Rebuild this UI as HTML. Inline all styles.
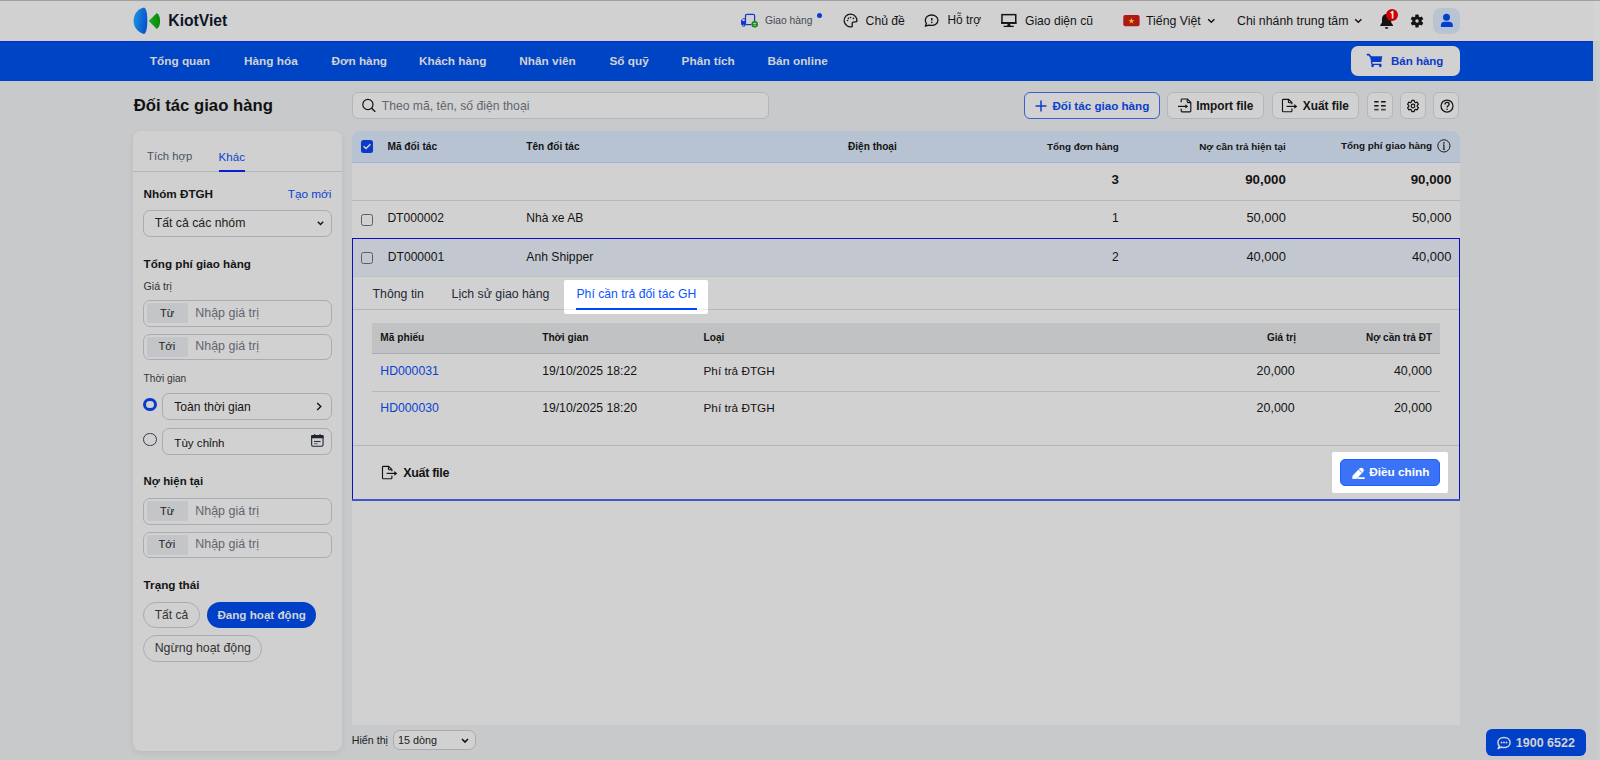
<!DOCTYPE html>
<html><head><meta charset="utf-8">
<style>
*{box-sizing:border-box;margin:0;padding:0}
html,body{width:1600px;height:760px;overflow:hidden}
body{font-family:"Liberation Sans",sans-serif;background:#c8c9cb;color:#141414;position:relative;font-size:12px}
.a{position:absolute}
.t{position:absolute;white-space:nowrap;line-height:1}
.r{text-align:right}
.b{font-weight:700}
.nav{color:#d2d2d2;font-weight:700;font-size:11.8px;top:56.1px}
.btn{position:absolute;border:1px solid #b4b6b9;border-radius:6px;background:#d1d1d1}
.inp{position:absolute;border:1px solid #a9acb0;border-radius:7px;background:#d1d1d1}
.pre{position:absolute;left:3px;top:2px;width:41px;height:20px;background:#c4c5c8;border-radius:2px}
.ph{color:#5f6670}
.th{font-weight:700;font-size:10px}
svg{position:absolute;overflow:visible}
</style></head>
<body>
<!-- header -->
<div class="a" style="left:0;top:0;width:1600px;height:1px;background:#9fa19f"></div>
<div class="a" style="left:0;top:1px;width:1593px;height:40px;background:#d1d1d1"></div>
<div class="a" style="left:1593px;top:1px;width:7px;height:40px;background:#d4d4d4"></div><div class="a" style="left:1597px;top:41px;width:3px;height:719px;background:#cbcccd"></div>
<div class="a" style="left:0;top:41px;width:1593px;height:39.7px;background:#0044c6;border-top:1px solid #0630c4"></div>

<svg style="left:0;top:0" width="200" height="41">
 <defs>
  <linearGradient id="lg1" x1="0" y1="0" x2="1" y2="0.3"><stop offset="0" stop-color="#1a9ae0"/><stop offset="1" stop-color="#0a55cc"/></linearGradient>
  <linearGradient id="lg2" x1="0" y1="0" x2="1" y2="0"><stop offset="0" stop-color="#18a818"/><stop offset="1" stop-color="#08880e"/></linearGradient>
 </defs>
 <path d="M144,7.6 C137.5,9.2 133.6,14.5 133.6,20.8 C133.6,27 137.5,32.3 144,34 C146.2,33.2 147.3,28.5 147.3,20.8 C147.3,13.2 146.2,8.4 144,7.6 Z" fill="url(#lg1)"/>
 <path d="M156.8,12.9 C158.8,14.2 160.1,17.2 160.1,21 C160.1,24.8 158.8,27.8 156.8,29.1 L148.8,21 Z" fill="url(#lg2)"/>
</svg>
<div class="t b" style="left:168.3px;top:12.9px;font-size:15.7px;color:#0d1526">KiotViet</div>

<!-- truck -->
<svg style="left:736px;top:10px" width="26" height="20" viewBox="0 0 26 20">
 <path d="M9.5,14.5 V5.6 Q9.5,4.3 11,4.3 H17.2 Q18.6,4.3 18.6,5.6 V11" fill="none" stroke="#1038cc" stroke-width="1.2"/>
 <path d="M9.5,14.6 H15.3" stroke="#1038cc" stroke-width="1.2"/>
 <path d="M5,14.8 V10.2 L7.2,8.2 H9.8 V14.8 Z" fill="#1038cc"/>
 <rect x="6.4" y="9.2" width="2.3" height="1.8" fill="#d1d1d1"/>
 <circle cx="7.6" cy="15.3" r="1.5" fill="#1038cc"/><circle cx="7.6" cy="15.3" r="0.6" fill="#d1d1d1"/>
 <circle cx="18.7" cy="14.3" r="3.3" fill="#0c8c1a"/>
 <path d="M17.1,13.4 H20.3 M17.5,15.2 H19.9" stroke="#d1d1d1" stroke-width="0.9"/>
</svg>
<div class="t" style="left:765px;top:15.8px;font-size:10.3px;color:#464b54">Giao hàng</div>
<div class="a" style="left:817px;top:12.5px;width:5px;height:5px;border-radius:50%;background:#0a3bd0"></div>
<!-- palette -->
<svg style="left:840px;top:10px" width="22" height="20" viewBox="0 0 22 20">
 <path d="M12.2,16.6 A6.4,6.4 0 1 1 16.8,11.6 L13.3,12.1 Q12.2,12.2 12.2,13.2 Z" fill="none" stroke="#141414" stroke-width="1.3" stroke-linejoin="round"/>
 <circle cx="8.4" cy="8.4" r="0.8" fill="#141414"/><circle cx="10.5" cy="7.5" r="0.8" fill="#141414"/><circle cx="13.4" cy="8.4" r="0.8" fill="#141414"/><circle cx="7.5" cy="10.5" r="0.8" fill="#141414"/>
</svg>
<div class="t" style="left:865.6px;top:15px;font-size:12.2px">Chủ đề</div>
<!-- help bubble -->
<svg style="left:921px;top:10px" width="22" height="20" viewBox="0 0 22 20">
 <path d="M4.3,16.2 L5.4,13.4 C4.6,12.5 4.3,11.4 4.3,10.2 C4.3,7.2 7.1,5 10.6,5 C14.1,5 16.9,7.2 16.9,10.2 C16.9,13.2 14.1,15.4 10.6,15.4 C9.6,15.4 8.7,15.3 7.9,15.1 Z" fill="none" stroke="#141414" stroke-width="1.3" stroke-linejoin="round"/>
 <path d="M10.8,7.9 V10.6" stroke="#141414" stroke-width="1.5"/><circle cx="10.8" cy="12.4" r="0.8" fill="#141414"/>
</svg>
<div class="t" style="left:947.5px;top:15.2px;font-size:11.9px">Hỗ trợ</div>
<!-- monitor -->
<svg style="left:997px;top:10px" width="24" height="20" viewBox="0 0 24 20">
 <rect x="4.95" y="4.65" width="13.8" height="8.4" fill="none" stroke="#141414" stroke-width="1.5"/>
 <path d="M4.2,12.9 H19.5" stroke="#141414" stroke-width="1.8"/>
 <path d="M11,13.6 L10,16 H13.8 L12.8,13.6 Z" fill="#141414"/>
 <path d="M6.6,16.4 H16.8" stroke="#141414" stroke-width="1.3"/>
</svg>
<div class="t" style="left:1025px;top:15.1px;font-size:12.1px">Giao diện cũ</div>
<!-- flag -->
<svg style="left:1122.5px;top:15px" width="17" height="12" viewBox="0 0 17 12">
 <rect x="0.3" y="0" width="16.3" height="11.3" rx="2" fill="#b01818"/>
 <path d="M8.45,2.6 L9.2,4.9 H11.5 L9.65,6.3 L10.35,8.6 L8.45,7.2 L6.55,8.6 L7.25,6.3 L5.4,4.9 H7.7 Z" fill="#d8c400"/>
</svg>
<div class="t" style="left:1146px;top:15.2px;font-size:12.3px">Tiếng Việt</div>
<svg style="left:1207px;top:18px" width="9" height="6" viewBox="0 0 9 6"><path d="M1.2,1.2 L4.3,4.2 L7.4,1.2" fill="none" stroke="#141414" stroke-width="1.5"/></svg>
<div class="t" style="left:1237px;top:15px;font-size:12.3px">Chi nhánh trung tâm</div>
<svg style="left:1354px;top:18px" width="9" height="6" viewBox="0 0 9 6"><path d="M1.2,1.2 L4.3,4.2 L7.4,1.2" fill="none" stroke="#141414" stroke-width="1.5"/></svg>
<!-- bell -->
<svg style="left:1379px;top:12px" width="16" height="18" viewBox="0 0 16 18">
 <path d="M7.6,2 C4.6,2 3,4.4 3,7.2 V10.6 L1.2,13.2 V14 H14 V13.2 L12.2,10.6 V7.2 C12.2,4.4 10.6,2 7.6,2 Z" fill="#141414"/>
 <path d="M5.8,15.2 C6,16.3 6.7,16.9 7.6,16.9 C8.5,16.9 9.2,16.3 9.4,15.2 Z" fill="#141414"/>
</svg>
<div class="a" style="left:1386px;top:8.8px;width:12.4px;height:12.4px;border-radius:50%;background:#d10000"></div>
<svg style="left:0;top:0" width="1600" height="41"><path d="M1390.6,13.2 L1392.6,11.6 V18.6" fill="none" stroke="#e6e6e6" stroke-width="1.7" stroke-linejoin="round"/></svg>
<!-- gear -->
<svg style="left:1416.7px;top:20.6px" width="1" height="1" viewBox="0 0 1 1">
 <g><rect x="-1.7" y="-6.4" width="3.4" height="3" rx="0.6" transform="rotate(120)" fill="#141414"/><rect x="-1.7" y="-6.4" width="3.4" height="3" rx="0.6" transform="rotate(180)" fill="#141414"/><rect x="-1.7" y="-6.4" width="3.4" height="3" rx="0.6" transform="rotate(240)" fill="#141414"/><rect x="-1.7" y="-6.4" width="3.4" height="3" rx="0.6" transform="rotate(300)" fill="#141414"/><rect x="-1.7" y="-6.4" width="3.4" height="3" rx="0.6" transform="rotate(360)" fill="#141414"/><rect x="-1.7" y="-6.4" width="3.4" height="3" rx="0.6" transform="rotate(420)" fill="#141414"/><circle r="4.7" fill="#141414"/><circle r="1.7" fill="#d1d1d1"/></g>
</svg>
<!-- avatar -->
<div class="a" style="left:1433.3px;top:7.5px;width:26.7px;height:26.5px;border-radius:8px;background:#b8c3d3"></div>
<svg style="left:1430px;top:4px" width="34" height="33" viewBox="0 0 34 33">
 <circle cx="16.5" cy="13.3" r="3.5" fill="#0040d0"/>
 <path d="M10.9,23 V21 C10.9,18.8 12.6,17.8 14.5,17.8 H19 C21,17.8 22.8,18.8 22.8,21 V23 Z" fill="#0040d0"/>
</svg>
<!-- nav -->
<div class="t nav" style="left:149.8px">Tổng quan</div>
<div class="t nav" style="left:244px">Hàng hóa</div>
<div class="t nav" style="left:331.5px">Đơn hàng</div>
<div class="t nav" style="left:419px">Khách hàng</div>
<div class="t nav" style="left:519.3px">Nhân viên</div>
<div class="t nav" style="left:609.4px">Sổ quỹ</div>
<div class="t nav" style="left:681.6px">Phân tích</div>
<div class="t nav" style="left:767.4px">Bán online</div>
<div class="a" style="left:1350.6px;top:45.6px;width:109.2px;height:30px;border-radius:7px;background:#d1d1d1"></div>
<svg style="left:1360px;top:48px" width="30" height="24" viewBox="0 0 30 24">
 <path d="M7.5,6.7 H9.1 L10.6,8.8" fill="none" stroke="#0a3bc8" stroke-width="1.7" stroke-linecap="round" stroke-linejoin="round"/>
 <path d="M9.9,8.3 H22.3 L21.3,13.9 H11.2 Z" fill="#0a3bc8"/>
 <path d="M11.3,13.6 L12.2,16.4 H21.3" fill="none" stroke="#0a3bc8" stroke-width="1.4"/>
 <circle cx="12.6" cy="17.8" r="1.35" fill="#0a3bc8"/><circle cx="20.3" cy="17.8" r="1.35" fill="#0a3bc8"/>
</svg>
<div class="t b" style="left:1391px;top:55.9px;font-size:11.5px;color:#0a3bc8">Bán hàng</div>

<!-- page title + toolbar -->
<div class="t b" style="left:133.75px;top:98.3px;font-size:16.7px;color:#111">Đối tác giao hàng</div>
<div class="inp" style="left:351.5px;top:92.2px;width:417px;height:26.4px;border-radius:6px;border-color:#b3b5b8"></div>
<svg style="left:362px;top:98px" width="15" height="15" viewBox="0 0 15 15">
 <circle cx="5.9" cy="6.5" r="5.1" fill="none" stroke="#141414" stroke-width="1.2"/><path d="M9.6,10.2 L13.3,13.8" stroke="#141414" stroke-width="1.4"/>
</svg>
<div class="t ph" style="left:381.7px;top:100px;font-size:12.2px">Theo mã, tên, số điện thoại</div>

<div class="btn" style="left:1024.3px;top:92.3px;width:136.1px;height:26.5px;border-color:#3d5fcf"></div>
<svg style="left:1035px;top:100px" width="12" height="12" viewBox="0 0 12 12"><path d="M6,0.6 V11.4 M0.6,6 H11.4" stroke="#0a3ecc" stroke-width="1.5"/></svg>
<div class="t b" style="left:1052.4px;top:100.35px;font-size:11.64px;color:#0a3ecc">Đối tác giao hàng</div>

<div class="btn" style="left:1167.4px;top:92.3px;width:97px;height:26.5px"></div>
<svg style="left:1170px;top:95px" width="30" height="20" viewBox="0 0 30 20">
 <path d="M11.2,7.2 V4.8 Q11.2,4 12,4 H17.4 L20.8,7.4 V16 Q20.8,16.8 20,16.8 H12 Q11.2,16.8 11.2,16 V13.8" fill="none" stroke="#141414" stroke-width="1.15"/>
 <path d="M17.2,4.2 V6.6 Q17.2,7.6 18.2,7.6 H20.6" fill="none" stroke="#141414" stroke-width="1.1"/>
 <path d="M8,11.4 H16.4" stroke="#141414" stroke-width="1.2"/>
 <path d="M15.4,9.2 L18.1,11.4 L15.4,13.6 Z" fill="#141414"/>
</svg>
<div class="t b" style="left:1196.2px;top:101.2px;font-size:11.85px">Import file</div>

<div class="btn" style="left:1271.9px;top:92.3px;width:87.5px;height:26.5px"></div>
<svg style="left:1276px;top:95px" width="30" height="20" viewBox="0 0 30 20">
 <path d="M15.9,9.3 V7.6 L12.6,4.3 H7.3 Q6.5,4.3 6.5,5.1 V15.9 Q6.5,16.7 7.3,16.7 H15.1 Q15.9,16.7 15.9,15.9 V13.5" fill="none" stroke="#141414" stroke-width="1.15"/>
 <path d="M12.4,4.4 V6.8 Q12.4,7.8 13.4,7.8 H15.8" fill="none" stroke="#141414" stroke-width="1.1"/>
 <path d="M10.6,11.4 H19" stroke="#141414" stroke-width="1.2"/>
 <path d="M18.3,9.1 L21.3,11.4 L18.3,13.7 Z" fill="#141414"/>
</svg>
<div class="t b" style="left:1302.75px;top:100.9px;font-size:11.89px">Xuất file</div>

<div class="btn" style="left:1367.3px;top:92.3px;width:25.8px;height:26.5px"></div>
<svg style="left:1366px;top:92px" width="30" height="28" viewBox="0 0 30 28">
 <path d="M8.2,9.7 H12.6 M15,9.7 H19.7 M8.2,13.8 H12.6 M15,13.8 H19.7" stroke="#141414" stroke-width="1.5"/>
 <path d="M8.2,17.6 H12.6 M15,17.6 H19.7" stroke="#4a4a4a" stroke-width="1.6"/>
</svg>
<div class="btn" style="left:1400.3px;top:92.3px;width:26.2px;height:26.5px"></div>
<svg style="left:1413.35px;top:105.8px" width="1" height="1" viewBox="0 0 1 1">
 <path d="M-1.54,-4.01 L-1.19,-5.58 L1.19,-5.58 L1.54,-4.01 L2.71,-3.34 L4.24,-3.81 L5.42,-1.76 L4.25,-0.67 L4.25,0.67 L5.42,1.76 L4.24,3.81 L2.71,3.34 L1.54,4.01 L1.19,5.58 L-1.19,5.58 L-1.54,4.01 L-2.71,3.34 L-4.24,3.81 L-5.42,1.76 L-4.25,0.67 L-4.25,-0.67 L-5.42,-1.76 L-4.24,-3.81 L-2.71,-3.34 Z" fill="none" stroke="#141414" stroke-width="1.2" stroke-linejoin="round"/>
 <circle r="1.8" fill="none" stroke="#141414" stroke-width="1.2"/>
</svg>
<div class="btn" style="left:1433.3px;top:92.3px;width:26.2px;height:26.5px"></div>
<svg style="left:1446.6px;top:105.6px" width="1" height="1" viewBox="0 0 1 1">
 <circle r="6" fill="none" stroke="#141414" stroke-width="1.25"/>
 <path d="M-2,-1.5 C-2,-2.9 -1.1,-3.6 0.1,-3.6 C1.3,-3.6 2.1,-2.8 2.1,-1.8 C2.1,-0.3 0.1,-0.2 0.1,1.5" fill="none" stroke="#141414" stroke-width="1.3"/>
 <circle cx="0.1" cy="3.3" r="0.8" fill="#141414"/>
</svg>

<!-- SIDEBAR -->
<div class="a" style="left:133px;top:131px;width:208.5px;height:619.5px;border-radius:8px;background:#d0d0d0;box-shadow:0 2px 6px rgba(0,0,0,0.07)"></div>
<div class="t" style="left:147.1px;top:151.2px;font-size:11.3px;color:#4a5261">Tích hợp</div>
<div class="t" style="left:218.5px;top:151.2px;font-size:11.6px;color:#0a42d0">Khác</div>
<div class="a" style="left:133px;top:171px;width:208.5px;height:1px;background:#b5b7ba"></div>
<div class="a" style="left:218.5px;top:170px;width:26.5px;height:2px;background:#0a1fd0"></div>
<div class="t b" style="left:143.6px;top:187.8px;font-size:11.7px">Nhóm ĐTGH</div>
<div class="t" style="left:287.7px;top:189px;font-size:11.8px;color:#0a42d0">Tạo mới</div>
<div class="inp" style="left:143.2px;top:210.3px;width:188.4px;height:26.5px"></div>
<div class="t" style="left:154.7px;top:217.3px;font-size:12.27px;color:#222">Tất cả các nhóm</div>
<svg style="left:316.5px;top:220.5px" width="7" height="5" viewBox="0 0 7 5"><path d="M0.8,0.8 L3.5,3.6 L6.2,0.8" fill="none" stroke="#141414" stroke-width="1.4"/></svg>

<div class="t b" style="left:143.6px;top:258px;font-size:11.65px">Tổng phí giao hàng</div>
<div class="t" style="left:143.6px;top:280.6px;font-size:10.65px;color:#333">Giá trị</div>
<div class="inp" style="left:143.3px;top:300.3px;width:188.3px;height:26.4px"><div class="pre"></div></div>
<div class="t" style="left:160px;top:307.9px;font-size:11.2px;color:#222">Từ</div>
<div class="t ph" style="left:195.3px;top:306.9px;font-size:12.45px">Nhập giá trị</div>
<div class="inp" style="left:143.3px;top:333.5px;width:188.3px;height:26px"><div class="pre"></div></div>
<div class="t" style="left:158.5px;top:341px;font-size:11.2px;color:#222">Tới</div>
<div class="t ph" style="left:195.3px;top:340px;font-size:12.45px">Nhập giá trị</div>

<div class="t" style="left:143.6px;top:374.4px;font-size:10.13px;color:#333">Thời gian</div>
<div class="a" style="left:143.3px;top:398px;width:13.4px;height:13.4px;border-radius:50%;border:3.7px solid #0a3bd0;background:#d1d1d1"></div>
<div class="inp" style="left:162.4px;top:393.4px;width:169.2px;height:26.4px"></div>
<div class="t" style="left:174.3px;top:401.4px;font-size:12.1px">Toàn thời gian</div>
<svg style="left:315.5px;top:401.6px" width="7" height="9" viewBox="0 0 7 9"><path d="M1.2,0.9 L4.8,4.5 L1.2,8.1" fill="none" stroke="#141414" stroke-width="1.4"/></svg>
<div class="a" style="left:143.3px;top:433px;width:13.4px;height:13.4px;border-radius:50%;border:1.1px solid #343a48"></div>
<div class="inp" style="left:162.4px;top:428px;width:169.2px;height:26.6px"></div>
<div class="t" style="left:174.3px;top:436.6px;font-size:11.6px">Tùy chỉnh</div>
<svg style="left:306px;top:396px" width="24" height="56" viewBox="0 0 24 56">
 <rect x="5.65" y="39.6" width="11.4" height="10.6" rx="1.4" fill="none" stroke="#1e2430" stroke-width="1.1"/>
 <rect x="5.1" y="39.1" width="12.5" height="3.1" rx="1" fill="#1e2430"/>
 <path d="M8.7,37.9 V39.6 M14,37.9 V39.6" stroke="#1e2430" stroke-width="1.1"/>
 <path d="M8,45.5 H14.6" stroke="#2a303a" stroke-width="1.1"/>
 <path d="M8,47.7 H11.8" stroke="#6a6f78" stroke-width="1.1"/>
</svg>

<div class="t b" style="left:143.6px;top:476.1px;font-size:11.43px">Nợ hiện tại</div>
<div class="inp" style="left:143.3px;top:498.4px;width:188.3px;height:26.4px"><div class="pre"></div></div>
<div class="t" style="left:160px;top:506.3px;font-size:11.2px;color:#222">Từ</div>
<div class="t ph" style="left:195.3px;top:505.3px;font-size:12.45px">Nhập giá trị</div>
<div class="inp" style="left:143.3px;top:532px;width:188.3px;height:26px"><div class="pre"></div></div>
<div class="t" style="left:158.5px;top:539px;font-size:11.2px;color:#222">Tới</div>
<div class="t ph" style="left:195.3px;top:538px;font-size:12.45px">Nhập giá trị</div>

<div class="t b" style="left:143.6px;top:579.4px;font-size:11.7px">Trạng thái</div>
<div class="a" style="left:143.2px;top:601.6px;width:56.4px;height:26.4px;border-radius:14px;border:1px solid #a9acb0"></div>
<div class="t" style="left:154.7px;top:608.8px;font-size:12.05px;color:#333">Tất cả</div>
<div class="a" style="left:206.8px;top:601.6px;width:109.7px;height:26.4px;border-radius:14px;background:#0040c8"></div>
<div class="t b" style="left:217.4px;top:609.2px;font-size:11.63px;color:#d4d4d4">Đang hoạt động</div>
<div class="a" style="left:143.2px;top:635px;width:118.4px;height:26.6px;border-radius:14px;border:1px solid #a9acb0"></div>
<div class="t" style="left:154.7px;top:642px;font-size:12.37px;color:#333">Ngừng hoạt động</div>

<!-- MAIN PANEL -->
<div class="a" style="left:352px;top:131px;width:1108px;height:594px;border-radius:8px 8px 0 0;background:#d1d1d1"></div>
<div class="a" style="left:352px;top:131px;width:1108px;height:32px;border-radius:8px 8px 0 0;background:#b7c3d2;border-bottom:1px solid #9fb5d6"></div>
<div class="a" style="left:360.7px;top:140.2px;width:12.4px;height:12.4px;border-radius:2.5px;background:#0a3bc8"></div>
<svg style="left:360.7px;top:140.2px" width="13" height="13" viewBox="0 0 13 13"><path d="M2.6,6.3 L5,8.6 L9.4,4.2" fill="none" stroke="#d8d8d8" stroke-width="1.4"/></svg>
<div class="t th" style="left:387.4px;top:141.8px;font-size:10.2px">Mã đối tác</div>
<div class="t th" style="left:526.3px;top:141.8px;font-size:10.1px">Tên đối tác</div>
<div class="t th" style="left:848px;top:141.8px;font-size:10.1px">Điện thoại</div>
<div class="t th r" style="right:481.2px;top:141.8px;font-size:9.8px">Tổng đơn hàng</div>
<div class="t th r" style="right:314.2px;top:141.8px;font-size:9.9px">Nợ cần trả hiện tại</div>
<div class="t th r" style="right:168px;top:141.2px;font-size:9.9px">Tổng phí giao hàng</div>
<svg style="left:1436.5px;top:138.5px" width="14" height="14" viewBox="0 0 14 14">
 <circle cx="6.9" cy="6.9" r="6.1" fill="none" stroke="#1a1a1a" stroke-width="1"/>
 <path d="M6.9,5.8 V10.2 M5.9,10.3 H8" stroke="#1a1a1a" stroke-width="1.1"/><path d="M6,5.9 H7.2" stroke="#1a1a1a" stroke-width="0.9"/><circle cx="6.9" cy="3.9" r="0.8" fill="#1a1a1a"/>
</svg>

<!-- summary row -->
<div class="a" style="left:352px;top:200px;width:1108px;height:1px;background:#b5b7ba"></div>
<div class="t b r" style="right:481.2px;top:173.1px;font-size:13.3px">3</div>
<div class="t b r" style="right:314.2px;top:173.1px;font-size:13.3px">90,000</div>
<div class="t b r" style="right:148.7px;top:173.1px;font-size:13.3px">90,000</div>

<!-- row 1 -->
<div class="a" style="left:360.7px;top:213.8px;width:12.4px;height:12.3px;border-radius:2.5px;border:1.3px solid #5a5e66"></div>
<div class="t" style="left:387.4px;top:212px;font-size:12.1px">DT000002</div>
<div class="t" style="left:526.3px;top:212px;font-size:12.06px">Nhà xe AB</div>
<div class="t r" style="right:481.2px;top:212px;font-size:12.1px">1</div>
<div class="t r" style="right:314.2px;top:212px;font-size:12.9px">50,000</div>
<div class="t r" style="right:148.7px;top:212px;font-size:12.9px">50,000</div>

<!-- expanded block -->
<div class="a" style="left:352px;top:238px;width:1108px;height:261px;border:1px solid #0a10c8;border-bottom:none"></div><div class="a" style="left:352px;top:499px;width:1108px;height:2px;background:#4254c6"></div>
<div class="a" style="left:353px;top:239px;width:1106px;height:37px;background:#c3c8d0"></div><div class="a" style="left:353px;top:276px;width:1106px;height:1px;background:#bfc0c2"></div>
<div class="a" style="left:360.7px;top:251.7px;width:12.4px;height:12.8px;border-radius:2.5px;border:1.3px solid #5a5e66"></div>
<div class="t" style="left:387.8px;top:251.2px;font-size:12.1px">DT000001</div>
<div class="t" style="left:526.3px;top:251.2px;font-size:12.17px">Anh Shipper</div>
<div class="t r" style="right:481.2px;top:251.2px;font-size:12.1px">2</div>
<div class="t r" style="right:314.2px;top:251.2px;font-size:12.9px">40,000</div>
<div class="t r" style="right:148.7px;top:251.2px;font-size:12.9px">40,000</div>

<div class="a" style="left:353px;top:309px;width:1106px;height:1px;background:#b5b7ba"></div>
<div class="t" style="left:372.6px;top:287.8px;font-size:12.3px;color:#222a36">Thông tin</div>
<div class="t" style="left:451.6px;top:287.8px;font-size:12.3px;color:#222a36">Lịch sử giao hàng</div>
<!-- highlight tab -->
<div class="a" style="left:564.1px;top:279.6px;width:144.2px;height:34.8px;background:#fff;border-radius:2px"></div>
<div class="a" style="left:564.1px;top:309px;width:144.2px;height:1px;background:#ececec"></div>
<div class="t" style="left:576.5px;top:287.7px;font-size:12.18px;color:#0a55ff">Phí cần trả đối tác GH</div>
<div class="a" style="left:576px;top:308px;width:120.5px;height:2px;background:#0048ff"></div>

<!-- inner table -->
<div class="a" style="left:372px;top:323.3px;width:1068px;height:30.7px;background:#c1c2c4;border-bottom:1px solid #a9abae"></div>
<div class="t th" style="left:380.3px;top:333.2px;font-size:10.17px">Mã phiếu</div>
<div class="t th" style="left:542.2px;top:333.2px;font-size:10.17px">Thời gian</div>
<div class="t th" style="left:703.5px;top:333.2px;font-size:10.17px">Loại</div>
<div class="t th r" style="right:304px;top:333.2px;font-size:10.03px">Giá trị</div>
<div class="t th r" style="right:168px;top:333.2px;font-size:10px">Nợ cần trả ĐT</div>
<div class="t" style="left:380.3px;top:364.7px;font-size:12.26px;color:#0a42d0">HD000031</div>
<div class="t" style="left:542.2px;top:364.7px;font-size:12.18px">19/10/2025 18:22</div>
<div class="t" style="left:703.5px;top:364.7px;font-size:11.77px">Phí trả ĐTGH</div>
<div class="t r" style="right:305.3px;top:364.7px;font-size:12.46px">20,000</div>
<div class="t r" style="right:168px;top:364.7px;font-size:12.46px">40,000</div>
<div class="a" style="left:372px;top:391px;width:1068px;height:1px;background:#b5b7ba"></div>
<div class="t" style="left:380.3px;top:402.4px;font-size:12.26px;color:#0a42d0">HD000030</div>
<div class="t" style="left:542.2px;top:402.4px;font-size:12.18px">19/10/2025 18:20</div>
<div class="t" style="left:703.5px;top:402.4px;font-size:11.77px">Phí trả ĐTGH</div>
<div class="t r" style="right:305.3px;top:402.4px;font-size:12.46px">20,000</div>
<div class="t r" style="right:168px;top:402.4px;font-size:12.46px">20,000</div>

<div class="a" style="left:353px;top:445px;width:1106px;height:1px;background:#b5b7ba"></div>
<svg style="left:376.2px;top:462.2px" width="30" height="20" viewBox="0 0 30 20">
 <path d="M15.9,9.3 V7.6 L12.6,4.3 H7.3 Q6.5,4.3 6.5,5.1 V15.9 Q6.5,16.7 7.3,16.7 H15.1 Q15.9,16.7 15.9,15.9 V13.5" fill="none" stroke="#141414" stroke-width="1.15"/>
 <path d="M12.4,4.4 V6.8 Q12.4,7.8 13.4,7.8 H15.8" fill="none" stroke="#141414" stroke-width="1.1"/>
 <path d="M10.6,11.4 H19" stroke="#141414" stroke-width="1.2"/>
 <path d="M18.3,9.1 L21.3,11.4 L18.3,13.7 Z" fill="#141414"/>
</svg>
<div class="t" style="left:403.2px;top:466.5px;font-size:12.5px;font-weight:700;letter-spacing:-0.3px">Xuất file</div>
<!-- highlight button -->
<div class="a" style="left:1331.7px;top:451.7px;width:115.9px;height:41.5px;background:#fff;border-radius:2px"></div>
<div class="a" style="left:1340px;top:458.8px;width:100px;height:27.1px;border-radius:5px;background:#3a73f5;border:1px solid #1a62f5"></div>
<svg style="left:1350.5px;top:465.5px" width="14" height="14" viewBox="0 0 14 14">
 <path d="M1.1,12.8 L1.7,9.4 L8.5,2.5 Q10.3,0.8 12.1,2.5 Q13.8,4.3 12.1,6 L5.3,12.9 Z" fill="#fff"/>
 <path d="M7.7,3.6 L11.1,6.6" stroke="#3a73f5" stroke-width="0.8"/>
 <path d="M7.3,12.2 H13" stroke="#fff" stroke-width="1.7" stroke-linecap="round"/>
</svg>
<div class="t b" style="left:1369.2px;top:466.8px;font-size:11.8px;color:#fff">Điều chỉnh</div>

<!-- footer -->
<div class="t" style="left:351.8px;top:734.7px;font-size:10.68px;color:#222">Hiển thị</div>
<div class="inp" style="left:393.2px;top:730px;width:83.3px;height:19.5px;border-radius:7px"></div>
<div class="t" style="left:398px;top:734.7px;font-size:10.8px;color:#222">15 dòng</div>
<svg style="left:461px;top:737.5px" width="8" height="6" viewBox="0 0 8 6"><path d="M1,1 L4,4 L7,1" fill="none" stroke="#141414" stroke-width="1.6"/></svg>

<div class="a" style="left:1486px;top:729.2px;width:99.7px;height:26.8px;border-radius:6px;background:#0040c8"></div>
<svg style="left:1495.5px;top:735px" width="16" height="15" viewBox="0 0 16 15">
 <path d="M2.2,13.6 L3.3,10.9 C2.4,10 1.9,8.9 1.9,7.5 C1.9,4.5 4.6,2.4 8,2.4 C11.4,2.4 14.1,4.5 14.1,7.5 C14.1,10.5 11.4,12.6 8,12.6 C7,12.6 6,12.4 5.1,12 Z" fill="none" stroke="#d2d2d2" stroke-width="1.5" stroke-linejoin="round"/>
 <circle cx="5.5" cy="7.5" r="0.95" fill="#d2d2d2"/><circle cx="8" cy="7.5" r="0.95" fill="#d2d2d2"/><circle cx="10.5" cy="7.5" r="0.95" fill="#d2d2d2"/>
</svg>
<div class="t b" style="left:1515.8px;top:737px;font-size:12.5px;color:#d2d2d2">1900 6522</div>
</body></html>
